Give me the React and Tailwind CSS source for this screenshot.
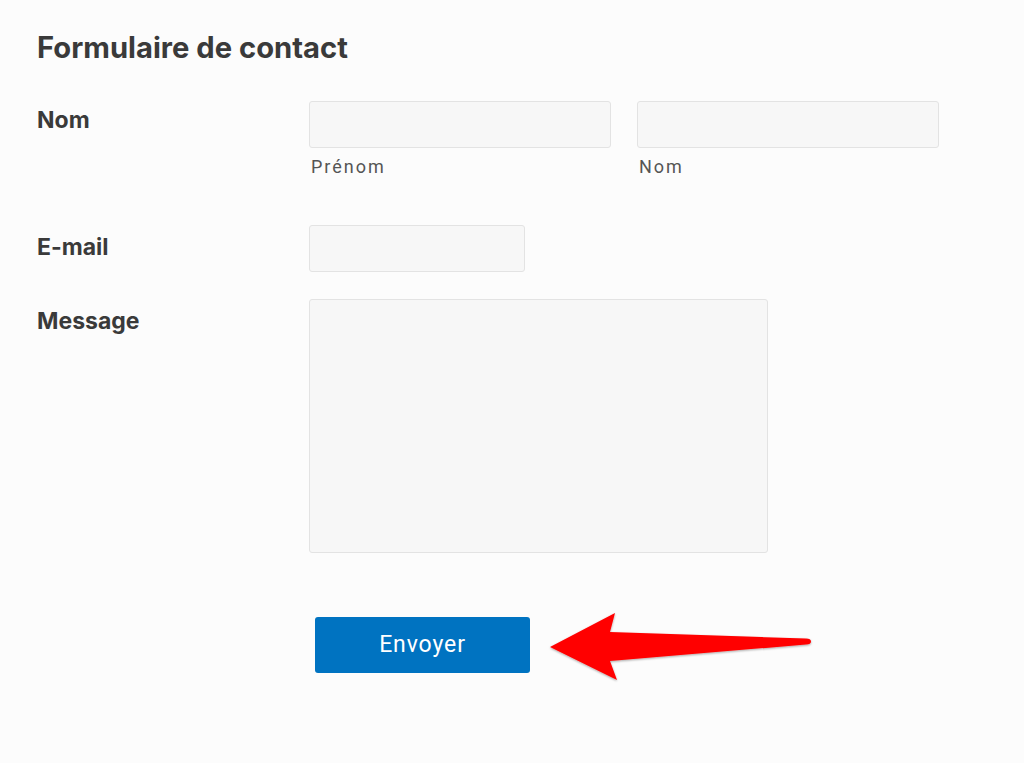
import React from "react";

const inputCls = "block h-[47px] bg-[#f7f7f7] border border-[#e3e3e3] rounded-[3px]";
const subCls = "mt-[7px] ml-[2px] text-[18px] leading-[24px] tracking-[2px] text-[#555]";
const labelCls = "w-[272px] shrink-0 text-[23px] leading-[30px] font-bold";

function Arrow() {
  return (
    <svg width="272" height="76" viewBox="0 0 272 76" className="ml-[16px] mt-[-8px]">
      <defs>
        <filter id="sh" x="-10%" y="-20%" width="120%" height="140%">
          <feDropShadow dx="0" dy="1" stdDeviation="1.2" floodColor="#000" floodOpacity="0.35" />
        </filter>
      </defs>
      <path
        d="M4 38 L69 4 L64 23 L260 29.5 Q265 29.5 265 32.5 Q265 35.5 260 35.5 L64 52 L71 71 Z"
        fill="#ff0000"
        filter="url(#sh)"
      />
    </svg>
  );
}

export default function App() {
  return (
    <div className="min-h-[763px] bg-[#fcfcfc] pl-[37px] pt-[28px] text-[#3a3a3a]" style={{ fontFamily: "Inter, 'Liberation Sans', sans-serif" }}>
      <h1 className="text-[29.2px] leading-[40px] font-bold">Formulaire de contact</h1>

      {/* Nom */}
      <div className="flex mt-[33px]">
        <label className={`${labelCls} pt-[4px]`}>Nom</label>
        <div className="flex gap-[26px]">
          <div>
            <input className={`${inputCls} w-[302px]`} />
            <div className={subCls} style={{ fontFamily: "Roboto, sans-serif" }}>Prénom</div>
          </div>
          <div>
            <input className={`${inputCls} w-[302px]`} />
            <div className={subCls} style={{ fontFamily: "Roboto, sans-serif" }}>Nom</div>
          </div>
        </div>
      </div>

      {/* E-mail */}
      <div className="flex mt-[46px]">
        <label className={`${labelCls} pt-[7px]`}>E-mail</label>
        <input className={`${inputCls} w-[216px] h-[46px]`} />
      </div>

      {/* Message */}
      <div className="flex mt-[27px]">
        <label className={`${labelCls} pt-[7px]`}>Message</label>
        <textarea className={`${inputCls} w-[459px] h-[254px] resize-none`} />
      </div>

      {/* Envoyer */}
      <div className="flex items-start mt-[64px] ml-[278px]">
        <button className="w-[215px] h-[56px] bg-[#0073c1] rounded-[3px] text-white text-[23px] tracking-[0.9px]" style={{ fontFamily: "Roboto, sans-serif" }}>
          Envoyer
        </button>
        <Arrow />
      </div>
    </div>
  );
}
